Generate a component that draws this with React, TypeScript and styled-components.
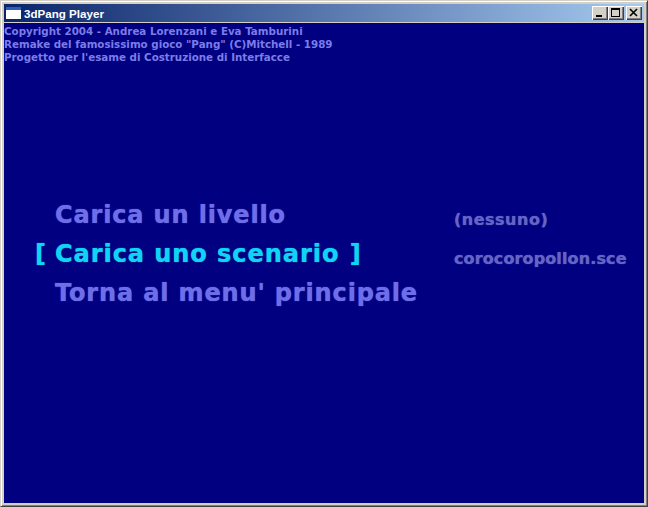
import styled, { createGlobalStyle } from "styled-components";

const GlobalStyle = createGlobalStyle`
  html, body {
    margin: 0;
    padding: 0;
    width: 648px;
    height: 507px;
    overflow: hidden;
    background: #d4d0c8;
  }
`;

const Window = styled.div`
  box-sizing: border-box;
  width: 648px;
  height: 507px;
  display: flex;
  flex-direction: column;
  padding: 3px;
  background: #d4d0c8;
  border: 1px solid;
  border-color: #d4d0c8 #404040 #404040 #d4d0c8;
  box-shadow: inset 1px 1px 0 #fff, inset -1px -1px 0 #808080;
`;

const TitleBar = styled.div`
  height: 18px;
  flex: none;
  display: flex;
  align-items: center;
  padding: 0 2px;
  margin-bottom: 1px;
  background: linear-gradient(90deg, #0a246a 0%, #a6caf0 100%);
`;

const AppIcon = styled.svg`
  width: 15px;
  height: 12px;
  flex: none;
  margin-right: 3px;
`;

const Title = styled.div`
  flex: 1;
  color: #fff;
  font: bold 11.6px "Liberation Sans", Tahoma, sans-serif;
`;

const CaptionButton = styled.div<{ $gap?: boolean }>`
  box-sizing: border-box;
  width: 16px;
  height: 14px;
  margin-left: ${(p) => (p.$gap ? "2px" : "0")};
  background: #d4d0c8;
  box-shadow: inset 1px 1px 0 #fff, inset -1px -1px 0 #404040,
    inset -2px -2px 0 #808080;
  display: flex;
  align-items: center;
  justify-content: center;
`;

const Client = styled.main`
  flex: 1;
  min-height: 0;
  background: #000080;
  font-family: "DejaVu Sans", Verdana, sans-serif;
  font-weight: bold;
`;

const Credits = styled.div`
  padding-top: 2px;
  font-size: 10.3px;
  line-height: 13px;
  color: #7c7ce8;
`;

const Menu = styled.div`
  display: grid;
  grid-template-columns: 419px 1fr;
  grid-auto-rows: 39px;
  margin-top: 131px;
  margin-left: 31px;
  align-items: center;
`;

const Item = styled.div<{ $active?: boolean }>`
  font-size: 24px;
  letter-spacing: ${(p) => (p.$active ? "0.95px" : "0.85px")};
  white-space: nowrap;
  padding-left: ${(p) => (p.$active ? "0" : "20px")};
  color: ${(p) => (p.$active ? "#10d4f4" : "#6e6ee8")};
  text-shadow: 0 0 1px currentColor;
`;

const Bracket = styled.span<{ $closing?: boolean }>`
  display: inline-block;
  width: 20px;
  margin-left: ${(p) => (p.$closing ? "1px" : "0")};
`;

const Side = styled.div<{ $wide?: boolean }>`
  padding-top: 9px;
  font-size: 16px;
  letter-spacing: ${(p) => (p.$wide ? "0.5px" : "0.12px")};
  color: #6464c4;
  white-space: nowrap;
  text-shadow: 0 0 1px currentColor;
`;

export default function App() {
  return (
    <>
      <GlobalStyle />
      <Window>
        <TitleBar>
          <AppIcon viewBox="0 0 15 12">
            <rect x="0" y="0" width="15" height="12" fill="#fff" />
            <rect x="0" y="0" width="15" height="3" fill="#2a5fc0" />
          </AppIcon>
          <Title>3dPang Player</Title>
          <CaptionButton>
            <svg width="16" height="14" viewBox="0 0 16 14">
              <rect x="4" y="9" width="6" height="2" fill="#000" />
            </svg>
          </CaptionButton>
          <CaptionButton>
            <svg width="16" height="14" viewBox="0 0 16 14">
              <path d="M3 2h9v9H3z M4 4v6h7V4z" fill="#000" fillRule="evenodd" />
            </svg>
          </CaptionButton>
          <CaptionButton $gap>
            <svg width="16" height="14" viewBox="0 0 16 14">
              <path d="M4 3l7 7M11 3l-7 7" stroke="#000" strokeWidth="1.6" />
            </svg>
          </CaptionButton>
        </TitleBar>
        <Client>
          <Credits>
            <div>Copyright 2004 - Andrea Lorenzani e Eva Tamburini</div>
            <div>Remake del famosissimo gioco "Pang" (C)Mitchell - 1989</div>
            <div>Progetto per l'esame di Costruzione di Interfacce</div>
          </Credits>
          <Menu>
            <Item>Carica un livello</Item>
            <Side $wide>(nessuno)</Side>
            <Item $active>
              <Bracket>[</Bracket>Carica uno scenario <Bracket $closing>]</Bracket>
            </Item>
            <Side>corocoropollon.sce</Side>
            <Item>Torna al menu' principale</Item>
          </Menu>
        </Client>
      </Window>
    </>
  );
}
